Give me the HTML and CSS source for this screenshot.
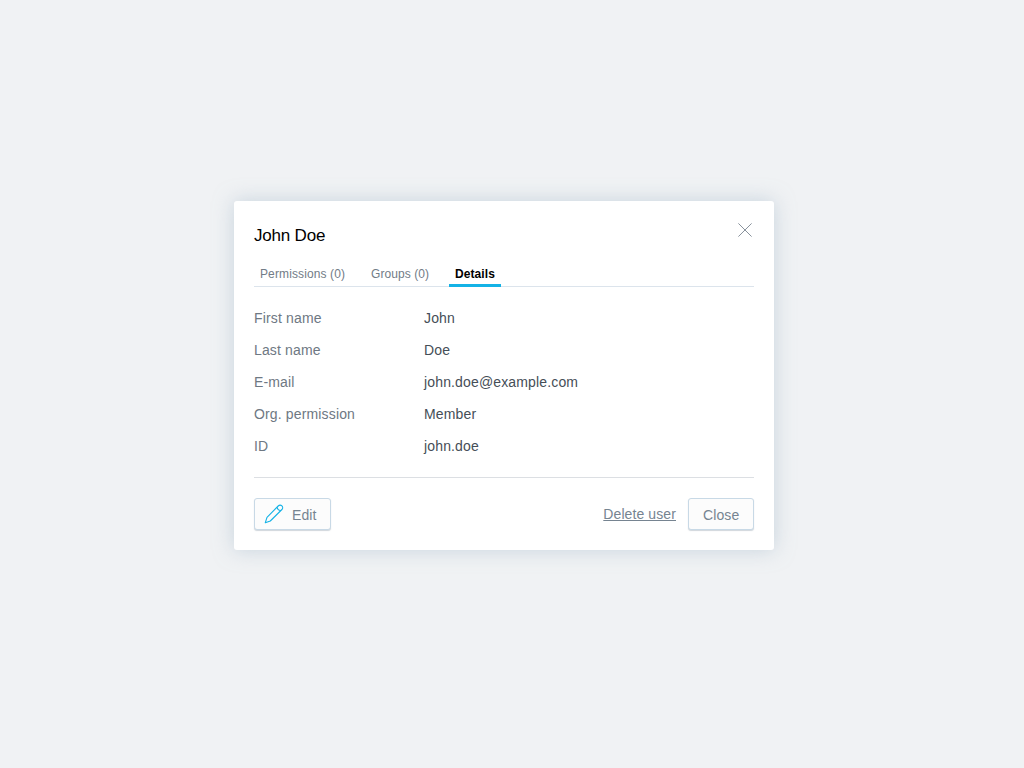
FILE: index.html
```
<!DOCTYPE html>
<html lang="en">
<head>
<meta charset="utf-8">
<title>John Doe</title>
<link rel="stylesheet" href="styles.css">
</head>
<body>
<div class="dialog">
  <header class="header">
    <h1 class="title">John Doe</h1>
    <svg class="close-icon" width="14" height="14" viewBox="0 0 14 14"><path d="M.4.4l13.2 13.2M13.6.4L.4 13.6"/></svg>
  </header>
  <nav class="tabs">
    <span class="tab">Permissions (0)</span>
    <span class="tab">Groups (0)</span>
    <span class="tab tab-active">Details</span>
  </nav>
  <dl class="details">
    <dt>First name</dt><dd>John</dd>
    <dt>Last name</dt><dd>Doe</dd>
    <dt>E-mail</dt><dd>john.doe@example.com</dd>
    <dt>Org. permission</dt><dd>Member</dd>
    <dt>ID</dt><dd>john.doe</dd>
  </dl>
  <footer class="footer">
    <button class="button button-edit"><svg class="pencil" width="20" height="20" viewBox="0 0 20 20"><path d="M1.300 18.700L3 13.300 14.200 2c1.200-1.200 2.700-1.100 3.700-.1s1.100 2.500 0 3.600L6.300 17zM13.300 2.900c-.3 1.900 1.600 4 3.800 3.500"/></svg>Edit</button>
    <a class="delete">Delete user</a>
    <button class="button button-close">Close</button>
  </footer>
</div>
</body>
</html>
```
FILE: styles.css
```
* { box-sizing: border-box; }
body {
  margin: 0;
  padding: 201px 0 0 234px;
  height: 768px;
  background: #f0f2f4;
  font-family: "Liberation Sans", Arial, sans-serif;
}
.dialog {
  width: 540px;
  height: 349px;
  padding: 20px;
  background: #fff;
  border-radius: 3px;
  box-shadow: 0 0 20px rgba(160, 182, 200, .5);
}
.header { display: flex; justify-content: space-between; height: 42px; }
.title { margin: 0; padding-top: 5px; font-size: 17px; line-height: 20px; font-weight: 400; letter-spacing: -.2px; color: #000; }
.close-icon { margin: 2px 2px 0 0; fill: none; stroke: #7c8691; stroke-width: .9; }
.tabs { display: flex; height: 24px; border-bottom: 1px solid #dce4ec; }
.tab { width: 97px; height: 24px; margin-right: 14px; padding-left: 6px; font-size: 12px; line-height: 22px; letter-spacing: .12px; color: #727c87; }
.tab:nth-child(2) { width: 70px; letter-spacing: .08px; }
.tab-active { width: 52px; border-bottom: 3px solid #14b2e6; color: #000; font-weight: 700; letter-spacing: .08px; }
.details {
  display: grid;
  grid-template-columns: 170px 1fr;
  grid-auto-rows: 32px;
  height: 191px;
  margin: 0;
  padding-top: 15px;
  border-bottom: 1px solid #dcdfe3;
  font-size: 14px;
  line-height: 32px;
  letter-spacing: .15px;
}
.details dt { color: #6e7883; }
.details dd { margin: 0; color: #454e57; }
.footer { display: flex; align-items: flex-start; padding-top: 20px; }
.button {
  display: flex;
  align-items: center;
  height: 32px;
  padding: 2px 14px 0;
  border: 1px solid #c8d9e6;
  border-radius: 3px;
  box-shadow: 0 1px 1px rgba(100, 120, 140, .3);
  background: #fcfcfc;
  color: #768491;
  font: 14px "Liberation Sans", Arial, sans-serif;
  letter-spacing: .1px;
}
.button-edit { width: 77px; padding-left: 9px; gap: 8px; }
.button-close { width: 66px; }
.pencil { flex: none; margin-top: -2px; fill: none; stroke: #14b2e6; stroke-width: 1.1; stroke-linejoin: round; }
.delete { margin: 0 12px 0 auto; font-size: 14px; line-height: 32px; letter-spacing: .1px; color: #768491; text-decoration: underline; }
```
